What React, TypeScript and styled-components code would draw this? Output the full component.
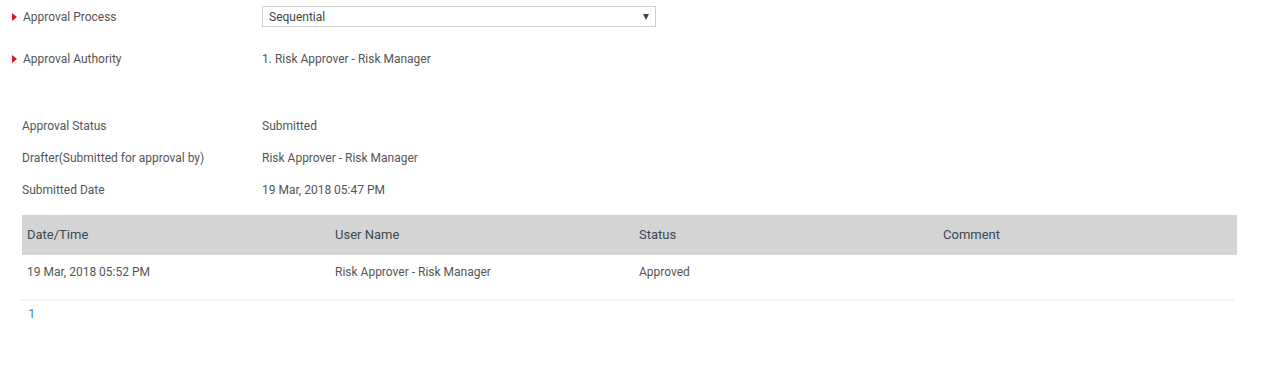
import React, { FC } from 'react';
import styled, { createGlobalStyle } from 'styled-components';

const GlobalStyle = createGlobalStyle`
  html, body {
    margin: 0;
    padding: 0;
    background: #ffffff;
  }
  body {
    font-family: Roboto, 'Liberation Sans', Arial, sans-serif;
    color: #555555;
  }
`;

const Page = styled.div`
  width: 1264px;
  height: 390px;
  box-sizing: border-box;
  padding: 6px 0 0 0;
`;

const FieldRow = styled.div<{ $height: number }>`
  display: flex;
  align-items: center;
  height: ${({ $height }) => $height}px;
`;

const Label = styled.div<{ $required?: boolean }>`
  position: relative;
  width: 262px;
  box-sizing: border-box;
  padding-left: ${({ $required }) => ($required ? 23 : 22)}px;
  font-size: 12px;
  color: #555555;

  &::before {
    content: '';
    display: ${({ $required }) => ($required ? 'block' : 'none')};
    position: absolute;
    left: 12px;
    top: 50%;
    margin-top: -4px;
    border-top: 4px solid transparent;
    border-bottom: 4px solid transparent;
    border-left: 5px solid #d9161c;
  }
`;

const Value = styled.div`
  font-size: 12px;
  color: #555555;
`;

const Select = styled.div`
  width: 394px;
  height: 21px;
  box-sizing: border-box;
  border: 1px solid #cfcfcf;
  display: flex;
  align-items: center;
  justify-content: space-between;
  padding: 0 6px 0 6px;
  font-size: 12px;
  color: #444444;
`;

const Caret = styled.span`
  width: 0;
  height: 0;
  border-left: 3px solid transparent;
  border-right: 3px solid transparent;
  border-top: 6px solid #444444;
`;

const Spacer = styled.div`
  height: 41px;
`;

const Table = styled.div`
  margin: 9px 27px 0 22px;
`;

const Row = styled.div<{ $head?: boolean }>`
  display: grid;
  grid-template-columns: 308px 304px 304px 1fr;
  height: ${({ $head }) => ($head ? 40 : 46)}px;
  box-sizing: border-box;
  align-items: ${({ $head }) => ($head ? 'center' : 'start')};
  padding-top: ${({ $head }) => ($head ? 0 : 10)}px;
  background: ${({ $head }) => ($head ? '#d4d4d4' : '#ffffff')};
  border-bottom: ${({ $head }) => ($head ? 'none' : '2px solid #f2f2f2')};
  margin-right: ${({ $head }) => ($head ? 0 : 3)}px;
  margin-left: ${({ $head }) => ($head ? 0 : -2)}px;
`;

const Cell = styled.div<{ $head?: boolean }>`
  padding-left: ${({ $head }) => ($head ? 5 : 7)}px;
  font-size: ${({ $head }) => ($head ? 13 : 12)}px;
  line-height: 14px;
  color: ${({ $head }) => ($head ? '#3d4852' : '#555555')};
`;

const Pager = styled.div`
  padding: 5px 0 0 28px;
  font-size: 13px;
  color: #3a8cc4;
`;

const fields = [
  { label: 'Approval Status', value: 'Submitted' },
  { label: 'Drafter(Submitted for approval by)', value: 'Risk Approver - Risk Manager' },
  { label: 'Submitted Date', value: '19 Mar, 2018 05:47 PM' },
];

const columns = ['Date/Time', 'User Name', 'Status', 'Comment'];
const history = [['19 Mar, 2018 05:52 PM', 'Risk Approver - Risk Manager', 'Approved', '']];

const App: FC = () => (
  <>
    <GlobalStyle />
    <Page>
      <FieldRow $height={21}>
        <Label $required>Approval Process</Label>
        <Select>
          <span>Sequential</span>
          <Caret />
        </Select>
      </FieldRow>
      <FieldRow $height={21} style={{ marginTop: 21 }}>
        <Label $required>Approval Authority</Label>
        <Value>1. Risk Approver - Risk Manager</Value>
      </FieldRow>
      <Spacer />
      {fields.map((field) => (
        <FieldRow key={field.label} $height={32}>
          <Label>{field.label}</Label>
          <Value>{field.value}</Value>
        </FieldRow>
      ))}
      <Table>
        <Row $head>
          {columns.map((col) => (
            <Cell key={col} $head>{col}</Cell>
          ))}
        </Row>
        {history.map((entry) => (
          <Row key={entry[0]}>
            {entry.map((text, i) => (
              <Cell key={i}>{text}</Cell>
            ))}
          </Row>
        ))}
      </Table>
      <Pager>1</Pager>
    </Page>
  </>
);

export default App;
